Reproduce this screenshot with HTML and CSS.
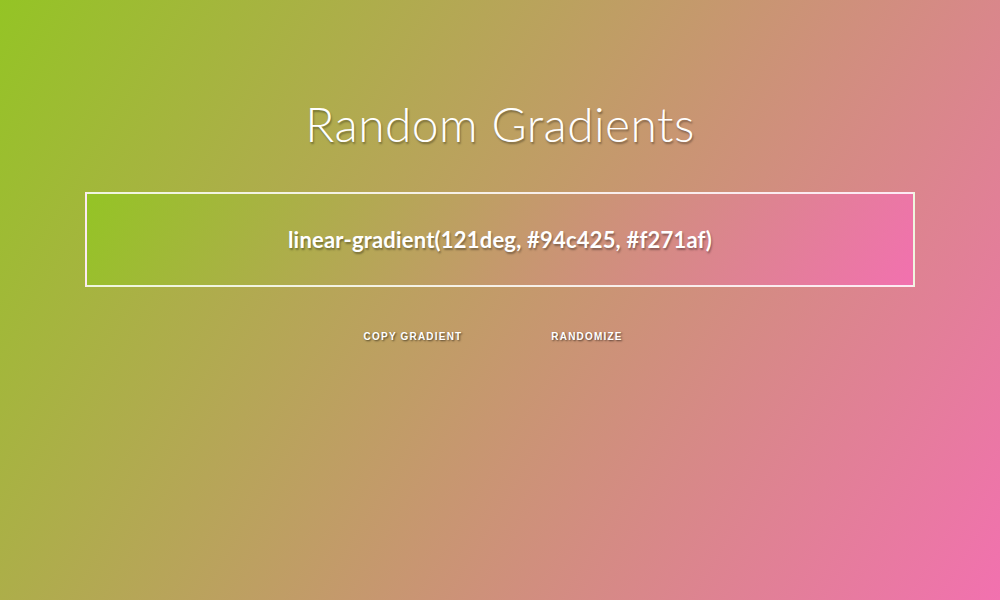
FILE: index.html
```html
<!DOCTYPE html>
<html>
<head>
<meta charset="utf-8">
<link rel="stylesheet" href="styles.css">
</head>
<body>
<main class="page">
  <h1 class="title">Random Gradients</h1>
  <div class="preview">
    <p class="code">linear-gradient(121deg, #94c425, #f271af)</p>
  </div>
  <div class="actions">
    <button class="btn">Copy Gradient</button>
    <button class="btn">Randomize</button>
  </div>
</main>
</body>
</html>
```
FILE: styles.css
```css
html, body {
  margin: 0;
  height: 100%;
}
body {
  background: linear-gradient(121deg, #94c425, #f271af);
  color: #fff;
  font-family: "Lato", "Open Sans", sans-serif;
}
.page {
  display: flex;
  flex-direction: column;
  align-items: center;
  padding-top: 94px;
}
.title {
  margin: 0;
  font-weight: 300;
  font-size: 48px;
  line-height: 60px;
  letter-spacing: 0.4px;
  text-shadow: 1px 2px 2px rgba(0,0,0,0.35);
}
.preview {
  margin-top: 38px;
  width: 826px;
  height: 91px;
  border: 2px solid rgba(255,255,255,0.85);
  background: linear-gradient(121deg, #94c425, #f271af);
  display: flex;
  align-items: center;
  justify-content: center;
}
.code {
  margin: 0;
  font-size: 22px;
  font-weight: 700;
  letter-spacing: 0.2px;
  text-shadow: 1px 2px 2px rgba(0,0,0,0.35);
}
.actions {
  margin-top: 44px;
  display: flex;
  gap: 24px;
}
.btn {
  width: 150px;
  background: none;
  border: 0;
  padding: 0;
  color: #fff;
  font-family: "Liberation Sans", Arial, sans-serif;
  font-weight: 700;
  font-size: 10px;
  letter-spacing: 1.2px;
  text-transform: uppercase;
  text-shadow: 1px 1px 2px rgba(0,0,0,0.6);
  cursor: pointer;
}
```
